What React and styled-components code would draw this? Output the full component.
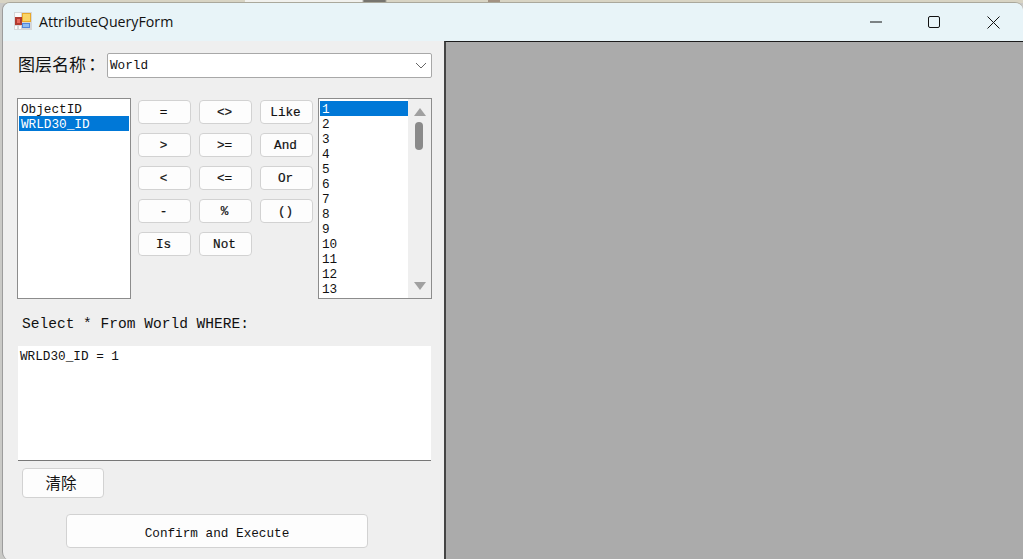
import React from "react";
import styled, { createGlobalStyle } from "styled-components";

const mono = `"Liberation Mono", "Noto Sans CJK SC", monospace`;

const GlobalStyle = createGlobalStyle`
  html, body {
    margin: 0;
    padding: 0;
    height: 100%;
    overflow: hidden;
    background: #c9c9c6;
  }
`;

const Desktop = styled.div`
  width: 1023px;
  height: 559px;
  padding: 2px 0 0 2px;
  box-sizing: border-box;
  overflow: hidden;
  background: linear-gradient(
      90deg,
      #d8d4c4 0 245px,
      #f1f1ee 245px 362px,
      #77756f 364px 385px,
      #d8d4c4 387px 488px,
      #a39282 488px 500px,
      #d8d4c4 500px
    )
    0 0 / 100% 3px no-repeat;
`;

const Window = styled.div`
  height: 100%;
  display: flex;
  flex-direction: column;
  border-top: 1px solid #aaa89c;
  border-left: 1px solid #9c9c9c;
  border-radius: 8px 8px 0 8px;
  overflow: hidden;
  background: #efefef;
`;

const TitleBar = styled.div`
  height: 38px;
  flex: none;
  display: flex;
  align-items: center;
  padding-left: 11px;
  background: #e8f4f8;
`;

const TitleIcon = styled.svg`
  margin-top: -2px;
  flex: none;
`;

const TitleText = styled.span`
  flex: 1;
  margin: -2px 0 0 7px;
  font: 14.2px "Open Sans", "Liberation Sans", sans-serif;
  color: #111;
`;

const WinButton = styled.div`
  width: 59px;
  height: 38px;
  display: flex;
  align-items: center;
  justify-content: center;
  padding-right: ${(p) => p.$nudge || 0}px;
  box-sizing: border-box;
`;

const Body = styled.div`
  flex: 1;
  min-height: 0;
  display: flex;
`;

const LeftPanel = styled.div`
  width: 441px;
  flex: none;
  box-sizing: border-box;
  padding: 12px 12px 0 14px;
  display: flex;
  flex-direction: column;
`;

const Canvas = styled.div`
  flex: 1;
  background: #ababab;
  border-top: 1px solid #1c1c1c;
  border-left: 2px solid #444;
`;

const LayerRow = styled.div`
  display: flex;
  align-items: center;
  height: 25px;
`;

const LayerLabel = styled.label`
  width: 89px;
  margin: -4px 0 0 1px;
  font: 17px/25px "Noto Sans CJK SC", sans-serif;
  color: #111;
  white-space: nowrap;
`;

const Colon = styled.span`
  margin-left: -2px;
  font-family: "Noto Sans CJK TC", sans-serif;
`;

const Combo = styled.div`
  flex: 1;
  height: 25px;
  box-sizing: border-box;
  display: flex;
  align-items: center;
  justify-content: space-between;
  padding: 0 4px 0 2px;
  background: #fff;
  border: 1px solid #a8a8a8;
  border-radius: 2px;
  font: 12.7px ${mono};
  color: #111;
`;

const QueryRow = styled.div`
  display: flex;
  margin-top: 20px;
  height: 201px;
`;

const ListBox = styled.div`
  width: 114px;
  flex: none;
  box-sizing: border-box;
  border: 1px solid #8c8c8c;
  background: #fff;
  padding: 2px 1px;
  overflow: hidden;
  display: flex;
`;

const Items = styled.div`
  flex: 1;
  min-width: 0;
`;

const Item = styled.div`
  height: 15px;
  padding-left: 2px;
  font: 12.7px/17px ${mono};
  color: ${(p) => (p.$selected ? "#fff" : "#111")};
  background: ${(p) => (p.$selected ? "#0078d7" : "transparent")};
`;

const ScrollBar = styled.div`
  width: 23px;
  flex: none;
  margin: -2px -1px -2px 0;
  background: #efefef;
  display: flex;
  flex-direction: column;
  align-items: center;
  justify-content: space-between;
  padding: 9px 0 8px;
  box-sizing: border-box;
  position: relative;
`;

const ScrollThumb = styled.div`
  position: absolute;
  top: 23px;
  left: 7px;
  width: 8px;
  height: 28px;
  border-radius: 4px;
  background: #8a8a8a;
`;

const Operators = styled.div`
  flex: 1;
  display: grid;
  grid-template-columns: repeat(3, 53px);
  grid-auto-rows: 24px;
  column-gap: 8px;
  row-gap: 9px;
  padding: 2px 0 0 7px;
`;

const PlainButton = styled.button`
  margin: 0;
  padding: 0 2px 0 0;
  box-sizing: border-box;
  background: #fdfdfd;
  border: 1px solid #d2d2d2;
  border-radius: 4px;
  font: 12.7px ${mono};
  color: #111;
`;

const OperatorButton = styled(PlainButton)`
  -webkit-text-stroke: 0.2px #111;
`;

const QueryLabel = styled.div`
  margin: 18px 0 0 5px;
  height: 15px;
  font: 14.55px/15px ${mono};
  color: #111;
`;

const WhereBox = styled.div`
  margin: 14px 1px 0 1px;
  height: 115px;
  box-sizing: border-box;
  padding: 3px 2px;
  background: #fff;
  border-bottom: 1px solid #777;
  font: 12.7px/15px ${mono};
  color: #111;
`;

const ClearButton = styled(PlainButton)`
  align-self: flex-start;
  width: 82px;
  height: 30px;
  margin: 7px 0 0 5px;
  padding: 0 4px 3px 0;
  font: 15.5px "Noto Sans CJK SC", sans-serif;
`;

const ConfirmButton = styled(PlainButton)`
  align-self: flex-start;
  width: 302px;
  height: 34px;
  margin: 16px 0 0 49px;
  padding: 4px 0 0 0;
`;

const operators = ["=", "<>", "Like", ">", ">=", "And", "<", "<=", "Or", "-", "%", "()", "Is", "Not"];
const values = Array.from({ length: 13 }, (_, i) => i + 1);

const FormIcon = () => (
  <TitleIcon width="18" height="18" viewBox="0 0 18 18">
    <rect width="18" height="18" fill="#d4d7d9" />
    <rect x="1" y="1" width="6" height="4" fill="#fbfbfb" />
    <rect x="8" y="1" width="9" height="9" fill="#e9a92a" />
    <rect x="9" y="2" width="7" height="7" fill="#fad566" />
    <rect x="1" y="5" width="7" height="8" fill="#b03a30" />
    <rect x="3" y="7" width="3" height="4" fill="#e8685c" />
    <rect x="8" y="11" width="8" height="5" fill="#4f86dc" />
    <rect x="9" y="12" width="6" height="3" fill="#8dbcf2" />
    <rect x="1" y="14" width="2" height="3" fill="#fbfbfb" />
    <rect x="5" y="14" width="2" height="3" fill="#fbfbfb" />
  </TitleIcon>
);

const Chevron = () => (
  <svg width="12" height="7" viewBox="0 0 12 7">
    <path d="M1 1l5 5 5-5" fill="none" stroke="#666" strokeWidth="1" />
  </svg>
);

const Triangle = ({ down }) => (
  <svg width="12" height="8" viewBox="0 0 12 8">
    <path d={down ? "M0 0h12L6 8z" : "M6 0l6 8H0z"} fill="#a0a0a0" />
  </svg>
);

export default function App() {
  return (
    <Desktop>
      <GlobalStyle />
      <Window>
        <TitleBar>
          <FormIcon />
          <TitleText>AttributeQueryForm</TitleText>
          <WinButton>
            <svg width="12" height="2" viewBox="0 0 12 2">
              <path d="M0 1h12" stroke="#111" strokeWidth="1" />
            </svg>
          </WinButton>
          <WinButton $nudge={2}>
            <svg width="12" height="12" viewBox="0 0 12 12">
              <rect x=".5" y=".5" width="11" height="11" rx="1.5" fill="none" stroke="#111" />
            </svg>
          </WinButton>
          <WinButton>
            <svg width="13" height="13" viewBox="0 0 13 13">
              <path d="M.5.5l12 12M12.5.5l-12 12" stroke="#111" strokeWidth="1" />
            </svg>
          </WinButton>
        </TitleBar>
        <Body>
          <LeftPanel>
            <LayerRow>
              <LayerLabel>
                图层名称<Colon>：</Colon>
              </LayerLabel>
              <Combo>
                World
                <Chevron />
              </Combo>
            </LayerRow>
            <QueryRow>
              <ListBox>
                <Items>
                  <Item>ObjectID</Item>
                  <Item $selected>WRLD30_ID</Item>
                </Items>
              </ListBox>
              <Operators>
                {operators.map((op) => (
                  <OperatorButton key={op}>{op}</OperatorButton>
                ))}
              </Operators>
              <ListBox>
                <Items>
                  {values.map((v) => (
                    <Item key={v} $selected={v === 1}>
                      {v}
                    </Item>
                  ))}
                </Items>
                <ScrollBar>
                  <Triangle />
                  <ScrollThumb />
                  <Triangle down />
                </ScrollBar>
              </ListBox>
            </QueryRow>
            <QueryLabel>Select * From World WHERE:</QueryLabel>
            <WhereBox>WRLD30_ID = 1</WhereBox>
            <ClearButton>清除</ClearButton>
            <ConfirmButton>Confirm and Execute</ConfirmButton>
          </LeftPanel>
          <Canvas />
        </Body>
      </Window>
    </Desktop>
  );
}
